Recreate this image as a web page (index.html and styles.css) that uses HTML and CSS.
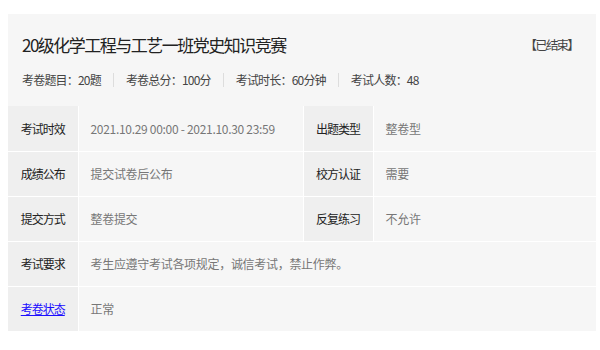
FILE: index.html
```html
<!DOCTYPE html>
<html>
<head>
    <title>党史知识竞赛</title>
    <link rel="stylesheet" href="styles.css">
</head>
<body>
    <div class="exam-card">
        <div class="exam-head">
            <div class="title-row">
                <h1 class="exam-title">20级化学工程与工艺一班党史知识竞赛</h1>
                <span class="exam-status">【已结束】</span>
            </div>
            <div class="exam-meta">
                <span class="meta-item">考卷题目：20题</span>
                <span class="meta-item">考卷总分：100分</span>
                <span class="meta-item">考试时长：60分钟</span>
                <span class="meta-item">考试人数：48</span>
            </div>
        </div>
        <table class="exam-info">
            <colgroup>
                <col class="col-label">
                <col class="col-value">
                <col class="col-label2">
                <col>
            </colgroup>
            <tr>
                <th>考试时效</th>
                <td>2021.10.29 00:00 - 2021.10.30 23:59</td>
                <th>出题类型</th>
                <td>整卷型</td>
            </tr>
            <tr>
                <th>成绩公布</th>
                <td>提交试卷后公布</td>
                <th>校方认证</th>
                <td>需要</td>
            </tr>
            <tr>
                <th>提交方式</th>
                <td>整卷提交</td>
                <th>反复练习</th>
                <td>不允许</td>
            </tr>
            <tr>
                <th>考试要求</th>
                <td colspan="3">考生应遵守考试各项规定，诚信考试，禁止作弊。</td>
            </tr>
            <tr>
                <th><a href="#">考卷状态</a></th>
                <td colspan="3">正常</td>
            </tr>
        </table>
    </div>
</body>
</html>
```

FILE: styles.css
```css
body {
    margin: 0;
    font-family: "Noto Sans CJK SC", "Noto Sans", sans-serif;
    color: #333;
    background-color: #fff;
}

.exam-card {
    margin: 14px 4px 0 8px;
    background-color: #f6f6f6;
}

.exam-head {
    height: 92px;
    padding: 15px 18px 0 14px;
    box-sizing: border-box;
}

.title-row {
    display: flex;
    justify-content: space-between;
    align-items: center;
    height: 30px;
}

.exam-title {
    margin: 0;
    font-size: 17px;
    font-weight: normal;
    letter-spacing: -1.5px;
    color: #222;
}

.exam-status {
    font-size: 12.5px;
    letter-spacing: -1.8px;
    color: #444;
}

.exam-meta {
    display: flex;
    align-items: center;
    margin-top: 13px;
    height: 16px;
    font-size: 12px;
    letter-spacing: -0.8px;
    color: #444;
}

.meta-item {
    padding: 0 12px;
    border-left: 1px solid #ddd;
    line-height: 14px;
}

.meta-item:first-child {
    padding-left: 0;
    border-left: none;
}

/* Detail table */
.exam-info {
    width: 100%;
    border-collapse: collapse;
    border-style: hidden;
    table-layout: fixed;
    font-size: 12px;
    letter-spacing: -0.3px;
}

.col-label {
    width: 70px;
}

.col-value {
    width: 225px;
}

.col-label2 {
    width: 70px;
}

.exam-info tr {
    height: 45px;
}

.exam-info th,
.exam-info td {
    border: 1px solid #fff;
    padding: 0;
}

.exam-info th {
    background-color: #efefef;
    font-weight: normal;
    letter-spacing: -1px;
    color: #222;
    text-align: center;
}

.exam-info td {
    padding-left: 12px;
    color: #777;
    text-align: left;
}

.exam-info th a {
    color: #1a0dff;
    text-decoration: underline;
}
```
